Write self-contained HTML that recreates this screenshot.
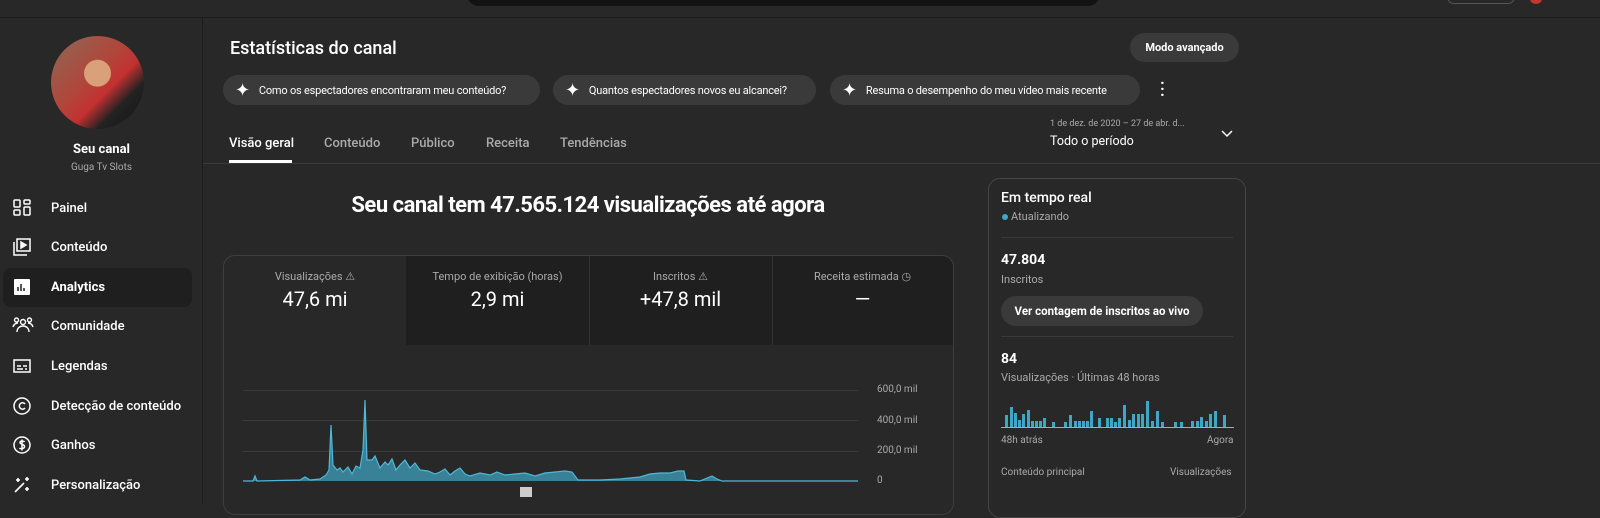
<!DOCTYPE html>
<html><head><meta charset="utf-8"><style>
*{margin:0;padding:0;box-sizing:border-box}
body{width:1600px;height:504px;overflow:hidden;background:#282828;font-family:"Roboto","Liberation Sans",sans-serif;color:#fff;position:relative}
.a{position:absolute;white-space:nowrap}
.top{left:0;top:0;width:1600px;height:18px;background:#282828;border-bottom:1px solid #1c1c1c}
.search{left:467px;top:-20px;width:633px;height:26px;background:#121212;border-radius:0 0 12px 12px}
.side{left:0;top:18px;width:203px;height:486px;border-right:1px solid #1c1c1c}
.nav{left:0;width:203px;height:40px;font-size:13px;font-weight:500;display:flex;align-items:center}
.nav svg{position:absolute;left:12px;top:10px}
.nav span{position:absolute;left:51px}
.chip{height:30px;border-radius:15px;background:#3a3a3a;font-size:11px;letter-spacing:-0.2px;display:flex;align-items:center;padding:0 10px 0 12px;top:75px;overflow:hidden}
.chip b{font-size:18px;margin-right:9px;font-weight:normal}
.tab{top:136px;font-size:13px;color:#aaa;font-weight:500}
.cell{top:256px;height:88px;text-align:center;font-size:11px;color:#aaa;padding-top:14px}
.cell .v{font-size:20px;color:#fff;margin-top:4px}
.ylab{font-size:10px;color:#aaa;left:877px}
.sep{left:1001px;width:232px;height:1px;background:#3a3a3a}
</style></head><body>
<div class="a top"></div>
<div class="a search"></div>
<div class="a" style="left:1447px;top:-10px;width:68px;height:14px;border:1px solid #555;border-radius:8px"></div>
<div class="a" style="left:1530px;top:-6px;width:12px;height:10px;border-radius:50%;background:#c0392b"></div>

<div class="a side"></div>
<div class="a" style="left:51px;top:36px;width:93px;height:93px;border-radius:50%;background:radial-gradient(circle at 50% 40%,#d9a07a 0 18%,transparent 19%),linear-gradient(135deg,#8a6a55 0%,#b3443a 45%,#c23030 60%,#222 75%,#151515 100%)"></div>
<div class="a" style="left:0;width:203px;top:142px;text-align:center;font-size:13px;font-weight:bold">Seu canal</div>
<div class="a" style="left:0;width:203px;top:162px;text-align:center;font-size:10px;color:#aaa">Guga Tv Slots</div>

<div class="a nav" style="top:188px"><svg width="20" height="20" viewBox="0 0 20 20" fill="none" stroke="#fff" stroke-width="1.5"><rect x="2" y="2" width="6" height="7" rx="1"/><rect x="12" y="2" width="6" height="4" rx="1"/><rect x="2" y="12" width="6" height="5" rx="1"/><rect x="12" y="9" width="6" height="8" rx="1"/></svg><span>Painel</span></div>
<div class="a nav" style="top:227px"><svg width="20" height="20" viewBox="0 0 20 20" fill="none" stroke="#fff" stroke-width="1.5"><rect x="5" y="2" width="13" height="12"/><path d="M2 5v13h13"/><path d="M9 5l5 3-5 3z" fill="#fff"/></svg><span>Conteúdo</span></div>
<div class="a" style="left:3px;top:268px;width:189px;height:39px;background:#1f1f1f;border-radius:8px"></div>
<div class="a nav" style="top:267px"><svg width="20" height="20" viewBox="0 0 20 20"><rect x="2" y="2" width="16" height="16" rx="1" fill="#fff"/><path d="M6 14V10M9 14V7M12 14v-3" stroke="#1f1f1f" stroke-width="1.5"/></svg><span style="font-weight:bold">Analytics</span></div>
<div class="a nav" style="top:306px"><svg width="22" height="20" viewBox="0 0 22 20" fill="none" stroke="#fff" stroke-width="1.4"><circle cx="11" cy="6" r="2.5"/><circle cx="4.5" cy="4" r="2"/><circle cx="17.5" cy="4" r="2"/><path d="M5 16c0-4 3-6 6-6s6 2 6 6M1 11c1-3 3-4 5-4M21 11c-1-3-3-4-5-4"/></svg><span>Comunidade</span></div>
<div class="a nav" style="top:346px"><svg width="20" height="20" viewBox="0 0 20 20" fill="none" stroke="#fff" stroke-width="1.5"><rect x="2" y="4" width="16" height="12"/><path d="M5 10h4M11 10h4M5 13h6M13 13h2"/></svg><span>Legendas</span></div>
<div class="a nav" style="top:386px"><svg width="20" height="20" viewBox="0 0 20 20" fill="none" stroke="#fff" stroke-width="1.5"><circle cx="10" cy="10" r="8"/><path d="M13 8a3.2 3.2 0 1 0 0 4"/></svg><span>Detecção de conteúdo</span></div>
<div class="a nav" style="top:425px"><svg width="20" height="20" viewBox="0 0 20 20" fill="none" stroke="#fff" stroke-width="1.5"><circle cx="10" cy="10" r="8"/><path d="M12.5 7c-.5-1-4.5-1.5-4.5.5S12.5 9 12.5 11.5 8 14 7.5 13M10 4.5v11"/></svg><span>Ganhos</span></div>
<div class="a nav" style="top:465px"><svg width="20" height="20" viewBox="0 0 20 20" fill="none" stroke="#fff" stroke-width="1.6"><path d="M3 17L12 8M6 3v4M4 5h4M15 2v4M13 4h4M15 12v4M13 14h4"/></svg><span>Personalização</span></div>

<div class="a" style="left:230px;top:38px;font-size:18px;font-weight:500">Estatísticas do canal</div>
<div class="a" style="left:1130px;top:33px;width:109px;height:29px;border-radius:15px;background:#3a3a3a;font-size:11px;font-weight:bold;display:flex;align-items:center;justify-content:center">Modo avançado</div>
<div class="a chip" style="left:223px;width:317px"><b>✦</b>Como os espectadores encontraram meu conteúdo?</div>
<div class="a chip" style="left:553px;width:263px"><b>✦</b>Quantos espectadores novos eu alcancei?</div>
<div class="a chip" style="left:830px;width:310px"><b>✦</b>Resuma o desempenho do meu vídeo mais recente</div>
<div class="a" style="left:1160px;top:80px;font-size:16px;font-weight:bold;line-height:6px;white-space:normal">·<br>·<br>·</div>

<div class="a tab" style="left:229px;color:#fff">Visão geral</div>
<div class="a" style="left:229px;top:160px;width:63px;height:3px;background:#fff"></div>
<div class="a tab" style="left:324px">Conteúdo</div>
<div class="a tab" style="left:411px">Público</div>
<div class="a tab" style="left:486px">Receita</div>
<div class="a tab" style="left:560px">Tendências</div>
<div class="a" style="left:1050px;top:119px;font-size:9px;color:#aaa">1 de dez. de 2020 – 27 de abr. d...</div>
<div class="a" style="left:1050px;top:134px;font-size:12.5px">Todo o período</div>
<svg class="a" style="left:1220px;top:129px" width="14" height="10"><path d="M2 2l5 5 5-5" stroke="#fff" stroke-width="1.5" fill="none"/></svg>
<div class="a" style="left:203px;top:163px;width:1397px;height:1px;background:#3a3a3a"></div>

<div class="a" style="left:223px;width:730px;top:193px;text-align:center;font-size:22px;font-weight:bold;letter-spacing:-0.5px">Seu canal tem 47.565.124 visualizações até agora</div>

<div class="a" style="left:223px;top:255px;width:731px;height:260px;border:1px solid #3e3e3e;border-radius:12px;overflow:hidden">
<div class="a" style="left:182px;top:0;width:548px;height:89px;background:#1f1f1f"></div>
<div class="a" style="left:365px;top:0;width:1px;height:89px;background:#333"></div>
<div class="a" style="left:548px;top:0;width:1px;height:89px;background:#333"></div>
</div>
<div class="a cell" style="left:224px;width:182px">Visualizações ⚠<div class="v">47,6 mi</div></div>
<div class="a cell" style="left:406px;width:183px">Tempo de exibição (horas)<div class="v">2,9 mi</div></div>
<div class="a cell" style="left:589px;width:183px">Inscritos ⚠<div class="v">+47,8 mil</div></div>
<div class="a cell" style="left:772px;width:181px">Receita estimada ◷<div class="v">—</div></div>

<svg class="a" style="left:0;top:0" width="960" height="504">
<g stroke="#3a3a3a" stroke-width="1"><path d="M243 390.5H858M243 420.5H858M243 451.5H858"/></g>
<path d="M243 481L253 481 255 476 257 481 300 480 305 477 310 480 320 479 326 475 329 470 331 425 333 465 337 470 340 468 343 472 348 467 352 474 356 466 360 468 363 450 365 400 367 460 372 460 375 456 380 468 385 462 388 465 392 459 396 470 400 465 405 460 410 468 415 463 420 470 428 471 435 474 440 472 445 469 450 475 455 471 460 468 465 474 470 476 480 473 490 475 497 472 505 475 515 474 525 473 535 476 545 473 555 472 565 471 572 472 578 480 600 480 620 479 640 477 650 474 660 473 670 473 678 471 684 471 686 480 700 481 707 478 712 476 717 479 722 481 858 481" fill="#3ea6c6" fill-opacity="0.7" stroke="#4fb8d8" stroke-width="1.2"/>
<rect x="520" y="487" width="12" height="10" fill="#ccc"/>
</svg>
<div class="a ylab" style="top:384px">600,0 mil</div>
<div class="a ylab" style="top:415px">400,0 mil</div>
<div class="a ylab" style="top:445px">200,0 mil</div>
<div class="a ylab" style="top:475px">0</div>

<div class="a" style="left:988px;top:178px;width:258px;height:340px;border:1px solid #444;border-radius:12px"></div>
<div class="a" style="left:1001px;top:190px;font-size:14px;font-weight:500">Em tempo real</div>
<div class="a" style="left:1002px;top:214px;width:6px;height:6px;border-radius:50%;background:#3ea6c6"></div>
<div class="a" style="left:1011px;top:210px;font-size:11px;color:#aaa">Atualizando</div>
<div class="a sep" style="top:237px"></div>
<div class="a" style="left:1001px;top:252px;font-size:14px;font-weight:bold">47.804</div>
<div class="a" style="left:1001px;top:273px;font-size:11px;color:#aaa">Inscritos</div>
<div class="a" style="left:1001px;top:296px;width:202px;height:30px;border-radius:15px;background:#3a3a3a;font-size:11.5px;font-weight:bold;display:flex;align-items:center;justify-content:center">Ver contagem de inscritos ao vivo</div>
<div class="a sep" style="top:336px"></div>
<div class="a" style="left:1001px;top:351px;font-size:14px;font-weight:bold">84</div>
<div class="a" style="left:1001px;top:371px;font-size:11px;color:#aaa">Visualizações · Últimas 48 horas</div>
<svg class="a" style="left:1001px;top:400px" width="233" height="30">
<g fill="#3ea6c6">
<rect x="4" y="15" width="3" height="12"/><rect x="9" y="7" width="3" height="20"/><rect x="13" y="13" width="3" height="14"/><rect x="17" y="20" width="3" height="7"/><rect x="21" y="14" width="3" height="13"/><rect x="26" y="10" width="3" height="17"/><rect x="30" y="21" width="3" height="6"/><rect x="34" y="21" width="3" height="6"/><rect x="38" y="21" width="3" height="6"/><rect x="42" y="18" width="3" height="9"/><rect x="51" y="22" width="3" height="5"/><rect x="63" y="22" width="3" height="5"/><rect x="68" y="15" width="3" height="12"/><rect x="73" y="21" width="3" height="6"/><rect x="77" y="21" width="3" height="6"/><rect x="81" y="21" width="3" height="6"/><rect x="85" y="21" width="3" height="6"/><rect x="89" y="11" width="3" height="16"/><rect x="97" y="18" width="3" height="9"/><rect x="105" y="18" width="3" height="9"/><rect x="109" y="18" width="3" height="9"/><rect x="113" y="22" width="3" height="5"/><rect x="117" y="18" width="3" height="9"/><rect x="122" y="5" width="3" height="22"/><rect x="127" y="20" width="3" height="7"/><rect x="131" y="14" width="3" height="13"/><rect x="136" y="14" width="3" height="13"/><rect x="140" y="14" width="3" height="13"/><rect x="145" y="1" width="3" height="26"/><rect x="150" y="21" width="3" height="6"/><rect x="155" y="11" width="3" height="16"/><rect x="160" y="22" width="3" height="5"/><rect x="173" y="22" width="3" height="5"/><rect x="179" y="22" width="3" height="5"/><rect x="190" y="21" width="3" height="6"/><rect x="195" y="21" width="3" height="6"/><rect x="199" y="17" width="3" height="10"/><rect x="204" y="21" width="3" height="6"/><rect x="208" y="14" width="3" height="13"/><rect x="213" y="11" width="3" height="16"/><rect x="222" y="15" width="3" height="12"/>
</g><rect x="0" y="27" width="233" height="1" fill="#aaa"/></svg>
<div class="a" style="left:1001px;top:435px;font-size:10px;color:#aaa">48h atrás</div>
<div class="a" style="left:1207px;top:435px;font-size:10px;color:#aaa">Agora</div>
<div class="a" style="left:1001px;top:467px;font-size:10px;color:#aaa">Conteúdo principal</div>
<div class="a" style="left:1170px;top:467px;font-size:10px;color:#aaa">Visualizações</div>
</body></html>
